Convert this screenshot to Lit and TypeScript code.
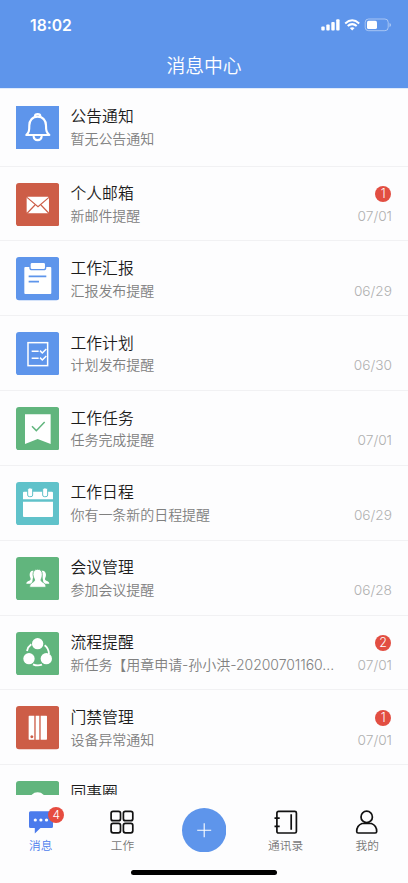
import { LitElement, html, svg, css, nothing } from "lit";
import { customElement, property } from "lit/decorators.js";

interface Message {
  icon: string;
  title: string;
  text: string;
  date?: string;
  count?: number;
}

const BLUE = "#5e95eb";
const RED = "#cd5d47";
const GREEN = "#61b57d";
const TEAL = "#60c2ca";

const messages: Message[] = [
  { icon: "bell", title: "公告通知", text: "暂无公告通知" },
  { icon: "mail", title: "个人邮箱", text: "新邮件提醒", date: "07/01", count: 1 },
  { icon: "report", title: "工作汇报", text: "汇报发布提醒", date: "06/29" },
  { icon: "plan", title: "工作计划", text: "计划发布提醒", date: "06/30" },
  { icon: "task", title: "工作任务", text: "任务完成提醒", date: "07/01" },
  { icon: "schedule", title: "工作日程", text: "你有一条新的日程提醒", date: "06/29" },
  { icon: "meeting", title: "会议管理", text: "参加会议提醒", date: "06/28" },
  { icon: "flow", title: "流程提醒", text: "新任务【用章申请-孙小洪-20200701160...", date: "07/01", count: 2 },
  { icon: "access", title: "门禁管理", text: "设备异常通知", date: "07/01", count: 1 },
  { icon: "circle", title: "同事圈", text: "" },
];

/* Tile glyphs are drawn on a 130-unit square. */
const tiles: Record<string, { color: string; round?: number; art: unknown }> = {
  bell: {
    color: BLUE,
    round: 0,
    art: svg`<g fill="none" stroke="#fff" stroke-width="6.500" stroke-linejoin="round" stroke-linecap="round">
      <path d="M65 32C49 32 40 44 40 58C40 75 39 79 31 87H100C92 79 90 75 90 58C90 44 81 32 65 32Z"/>
      <path d="M57 31C57 22 73 22 73 31"/><path d="M53 92C55 106 75 106 77 92"/></g>`,
  },
  mail: {
    color: RED,
    art: svg`<rect x="32" y="41" width="67" height="50" rx="4" fill="#fff"/>
      <path d="M33 43L66 71L99 43M34 90L57 66M98 90L75 66" fill="none" stroke="#cd5d47" stroke-width="3.5"/>`,
  },
  report: {
    color: BLUE,
    art: svg`<rect x="25" y="30" width="81" height="81" rx="3" fill="#fff"/>
      <rect x="42" y="16" width="47" height="22" rx="6" fill="#fff" stroke="#5e95eb" stroke-width="4"/>
      <path d="M38 58H91M38 74H69" stroke="#5e95eb" stroke-width="5"/>`,
  },
  plan: {
    color: BLUE,
    art: svg`<g fill="none" stroke="#fff" stroke-width="4.500"><rect x="36" y="32" width="59" height="69"/>
      <path d="M47 58H68M47 79H68M72 56L79 63L91 51M72 77L79 84L91 72"/></g>`,
  },
  task: {
    color: GREEN,
    art: svg`<path d="M27 22H104V111L65 96L27 111Z" fill="#fff"/>
      <path d="M48 58L61 71L86 45" fill="none" stroke="#61b57d" stroke-width="4.5"/>`,
  },
  schedule: {
    color: TEAL,
    art: svg`<path d="M21 32Q21 29 24 29H108Q111 29 111 32V52H21ZM21 59H111V102Q111 105 108 105H24Q21 105 21 102Z" fill="#fff"/>
      <g fill="#fff" stroke="#60c2ca" stroke-width="3"><rect x="35" y="18" width="15" height="26" rx="5"/><rect x="80" y="18" width="15" height="26" rx="5"/></g>`,
  },
  meeting: {
    color: GREEN,
    art: svg`<g fill="#fff"><path d="M54 42C46 39 41 45 41 53C41 60 44 62 44 66C44 72 31 72 31 80H48Z"/>
      <path d="M76 42C84 39 90 45 90 53C90 60 87 62 87 66C87 72 100 72 100 80H83Z"/></g>
      <path d="M65 37C56 37 51 43 51 52C51 60 55 64 56 69C56 77 41 75 41 91H90C90 75 75 77 75 69C76 64 79 60 79 52C79 43 74 37 65 37Z" fill="#fff" stroke="#61b57d" stroke-width="2.500"/>`,
  },
  flow: {
    color: GREEN,
    art: svg`<g fill="#fff"><circle cx="65" cy="35" r="17"/><circle cx="39" cy="80" r="17"/><circle cx="91" cy="80" r="17"/></g>
      <g fill="none" stroke="#fff" stroke-width="5.500"><path d="M33 57Q36 44 46 37M86 40Q98 49 99 66M51 97Q65 103 78 98"/></g>`,
  },
  access: {
    color: RED,
    art: svg`<path d="M38 31Q38 29 40 29H55V101H40Q38 101 38 99ZM59 29H70V101H59ZM74 29H91Q93 29 93 31V99Q93 101 91 101H74Z" fill="#fff"/>
      <circle cx="47.500" cy="92" r="4.500" fill="#cd5d47"/>`,
  },
  circle: {
    color: GREEN,
    art: svg`<circle cx="65" cy="59" r="25" fill="#fff"/>`,
  },
};

@customElement("message-row")
class MessageRow extends LitElement {
  @property({ attribute: false }) item!: Message;

  static styles = css`
    :host {
      display: flex;
      box-sizing: border-box;
      height: 74.85px;
      flex: none;
      padding: 16px 16px 0 16px;
      border-bottom: 1px solid #f1f1f3;
    }
    .tile { flex: none; width: 43.3px; height: 43.3px; display: block; }
    .body { flex: none; width: 270px; margin-left: 11.200px; padding-top: 0.6px; white-space: nowrap; }
    .title { font-size: 15.8px; line-height: 22px; color: #1c1c1c; }
    .text { font-size: 14px; line-height: 22px; color: #808080; letter-spacing: -0.05px; margin-top: -0.4px; }
    .side { flex: 1; display: flex; flex-direction: column; align-items: flex-end; }
    .slot { height: 22.200px; display: flex; align-items: center; }
    .count {
      width: 16px; height: 16px; border-radius: 50%; background: #e24e42; color: #fff;
      font-size: 12.500px; line-height: 16px; text-align: center; margin-right: 0.8px;
    }
    .date { font-size: 13.700px; line-height: 22px; color: #b0b0b0; white-space: nowrap; }
  `;

  render() {
    const m = this.item;
    const t = tiles[m.icon];
    return html`
      <svg class="tile" viewBox="0 0 130 130">
        <rect width="130" height="130" rx=${t.round ?? 9} fill=${t.color}></rect>${t.art}
      </svg>
      <div class="body">
        <div class="title">${m.title}</div>
        <div class="text">${m.text}</div>
      </div>
      <div class="side">
        <div class="slot">${m.count ? html`<div class="count">${m.count}</div>` : nothing}</div>
        <div class="date">${m.date ?? ""}</div>
      </div>`;
  }
}

@customElement("app-root")
class AppRoot extends LitElement {
  static styles = css`
    :host {
      display: flex; flex-direction: column; width: 408px; height: 883px; overflow: hidden;
      background: #fdfdfe; font-family: Inter, "Noto Sans CJK SC", sans-serif; font-weight: 350;
    }
    .head { flex: none; height: 88px; background: #5e95eb; color: #fff; box-shadow: 0 1px 0 #dfebfc; z-index: 1; }
    .status { height: 50px; display: flex; align-items: center; justify-content: space-between; padding: 0 17px 0 30px; }
    .clock { font-size: 15.700px; font-weight: 600; }
    .signals { display: block; width: 70px; height: 14px; }
    .heading { font-size: 18.800px; line-height: 32px; text-align: center; padding-top: 1px; }
    .list { flex: 1; min-height: 0; overflow: hidden; display: flex; flex-direction: column; }
    .first { height: 78.5px; padding-top: 17.8px; }
    .tabs { flex: none; height: 74px; display: grid; grid-template-columns: repeat(5, 1fr); }
    .tab { display: flex; flex-direction: column; align-items: center; padding-top: 15px; font-size: 11.700px; line-height: 16px; color: #777; }
    .active { color: #4d7ded; }
    .icon { display: block; width: 24px; height: 24px; margin-bottom: 4px; }
    .holder { position: relative; }
    .badge {
      position: absolute; left: 19.500px; top: -3px; width: 16px; height: 16px; border-radius: 50%;
      background: #e64c40; color: #fff; font-size: 12px; line-height: 16px; text-align: center;
    }
    .plus { width: 44.400px; height: 44.400px; margin-top: -2px; display: block; }
    .home { flex: none; height: 14px; display: flex; justify-content: center; }
    .pill { width: 146px; height: 5px; border-radius: 3px; background: #000; margin-top: 0.5px; }
  `;

  render() {
    return html`
      <div class="head">
        <div class="status">
          <div class="clock">18:02</div>
          <svg class="signals" viewBox="0 0 70 14">
            <g fill="#fff">
              <rect x="0.300" y="8.500" width="3.400" height="4" rx="0.9"></rect>
              <rect x="5.300" y="6.500" width="3.400" height="6" rx="0.9"></rect>
              <rect x="10.300" y="4" width="3.400" height="8.500" rx="0.9"></rect>
              <rect x="15.200" y="1.300" width="3.400" height="11.200" rx="0.9"></rect>
              <path d="M31.200 12.500L28.800 10.100Q31.200 8.200 33.600 10.100Z"></path>
            </g>
            <g fill="none" stroke="#fff" stroke-width="2">
              <path d="M24.200 5.400Q31.200 -0.900 38.200 5.400"></path>
              <path d="M26.700 8.100Q31.200 4.100 35.700 8.100"></path>
            </g>
            <rect x="44.200" y="1" width="23" height="11.700" rx="3.300" fill="none" stroke="#fff" stroke-opacity="0.45"></rect>
            <rect x="46" y="2.800" width="10" height="8.200" rx="1.600" fill="#fff"></rect>
            <path d="M68.500 5Q70 5.500 70 7T68.500 9Z" fill="#fff" fill-opacity="0.5"></path>
          </svg>
        </div>
        <div class="heading">消息中心</div>
      </div>
      <div class="list">
        ${messages.map((m, i) => html`<message-row class=${i === 0 ? "first" : ""} .item=${m}></message-row>`)}
      </div>
      <div class="tabs">
        <div class="tab active">
          <div class="holder">
            <svg class="icon" viewBox="0 0 24 24">
              <path d="M1.500 1.300H22.500Q24 1.300 24 2.800V16.500Q24 18 22.500 18H11.500L5.800 23.500V18H1.500Q0 18 0 16.500V2.800Q0 1.300 1.500 1.300Z" fill="#4b7bec"></path>
              <g fill="#fff"><circle cx="6.300" cy="10" r="1.600"></circle><circle cx="11.900" cy="10" r="1.600"></circle><circle cx="17.500" cy="10" r="1.600"></circle></g>
            </svg>
            <div class="badge">4</div>
          </div>
          <div>消息</div>
        </div>
        <div class="tab">
          <svg class="icon" viewBox="0 0 24 24">
            <g fill="none" stroke="#111" stroke-width="1.700">
              <rect x="1.100" y="1.300" width="9.400" height="9.400" rx="2"></rect>
              <rect x="13.400" y="1.300" width="9.400" height="9.400" rx="2"></rect>
              <rect x="1.100" y="13.400" width="9.400" height="9.400" rx="2"></rect>
              <rect x="13.400" y="13.400" width="9.400" height="9.400" rx="2"></rect>
            </g>
          </svg>
          <div>工作</div>
        </div>
        <div class="tab">
          <svg class="plus" viewBox="0 0 44.400 44.400">
            <circle cx="22.200" cy="22.200" r="22.200" fill="#5e95eb"></circle>
            <path d="M15.200 22.200H29.200M22.200 15.200V29.200" stroke="#fff" stroke-width="1.100"></path>
          </svg>
        </div>
        <div class="tab">
          <svg class="icon" viewBox="0 0 24 24">
            <g fill="none" stroke="#111" stroke-width="1.700">
              <rect x="2.900" y="1.300" width="19.500" height="21.700" rx="1.600"></rect>
              <path d="M17.200 4.200V19.800M0.500 8.200H5.700M0.500 16.300H5.700"></path>
            </g>
          </svg>
          <div>通讯录</div>
        </div>
        <div class="tab">
          <svg class="icon" viewBox="0 0 24 24">
            <g fill="none" stroke="#111" stroke-width="1.700">
              <circle cx="11.700" cy="6.900" r="5.700"></circle>
              <path d="M7 13.500H16.400Q21.700 15.500 21.700 21.500Q21.700 23 20.200 23H3.200Q1.700 23 1.700 21.500Q1.700 15.500 7 13.500Z" stroke-linejoin="round"></path>
            </g>
          </svg>
          <div>我的</div>
        </div>
      </div>
      <div class="home"><div class="pill"></div></div>
    `;
  }
}
